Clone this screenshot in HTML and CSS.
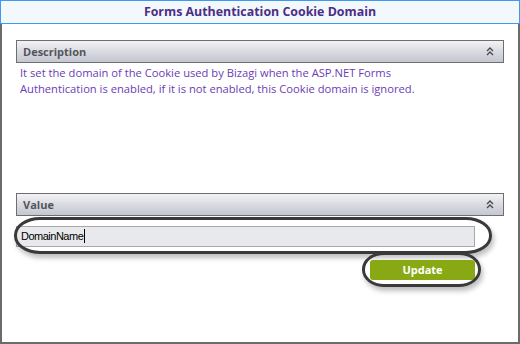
FILE: index.html
```html
<!DOCTYPE html>
<html>
<head>
<meta charset="utf-8">
<link rel="stylesheet" href="styles.css">
</head>
<body>
<div class="window">
  <div class="titlebar">Forms Authentication Cookie Domain</div>
  <div class="content">
    <div class="panel-header">
      <span class="panel-title">Description</span>
      <svg class="chev" width="8" height="9" viewBox="0 0 8 9"><polyline points="1,4 4,1 7,4" fill="none" stroke="#4a4a4a" stroke-width="1.4"/><polyline points="1,8 4,5 7,8" fill="none" stroke="#4a4a4a" stroke-width="1.4"/></svg>
    </div>
    <p class="desc">It set the domain of the Cookie used by Bizagi when the ASP.NET Forms Authentication is enabled, if it is not enabled, this Cookie domain is ignored.</p>
    <div class="panel-header value-header">
      <span class="panel-title">Value</span>
      <svg class="chev" width="8" height="9" viewBox="0 0 8 9"><polyline points="1,4 4,1 7,4" fill="none" stroke="#4a4a4a" stroke-width="1.4"/><polyline points="1,8 4,5 7,8" fill="none" stroke="#4a4a4a" stroke-width="1.4"/></svg>
    </div>
    <div class="value-body">
      <div class="field">
        <div class="input">DomainName<span class="caret"></span></div>
        <div class="ring ring-input"></div>
      </div>
      <div class="actions">
        <div class="btn-wrap">
          <div class="btn">Update</div>
          <div class="ring ring-btn"></div>
        </div>
      </div>
    </div>
  </div>
</div>
</body>
</html>
```

FILE: styles.css
```css
html, body {
  margin: 0;
  padding: 0;
  background: #ffffff;
}
.window {
  width: 520px;
  height: 344px;
  display: flex;
  flex-direction: column;
  box-sizing: border-box;
  font-family: "Open Sans", "Noto Sans", sans-serif;
}
.titlebar {
  height: 24px;
  box-sizing: border-box;
  border: 1px solid #3c98f2;
  background: #f3f8fd;
  color: #4a2f86;
  font-weight: bold;
  font-size: 12.4px;
  line-height: 22px;
  text-align: center;
}
.content {
  flex: 1;
  border: 2px solid #6b6b6b;
  border-top: none;
  padding: 16px 14px 0 14px;
}
.panel-header {
  height: 23px;
  box-sizing: border-box;
  border: 1px solid #6e6e70;
  background: linear-gradient(#f3f3f5, #dcdde3 45%, #c4c6d2);
  display: flex;
  align-items: center;
  justify-content: space-between;
  padding: 0 9px 0 6px;
}
.panel-title {
  color: #555559;
  font-weight: bold;
  font-size: 11px;
}
.chev {
  display: block;
}
.desc {
  margin: 2px 0 0 4px;
  max-width: 410px;
  color: #6a3db5;
  font-size: 11.2px;
  line-height: 16px;
}
.value-header {
  margin-top: 96px;
}
.value-body {
  width: 459px;
}
.field {
  position: relative;
  margin-top: 10px;
}
.input {
  height: 21px;
  box-sizing: border-box;
  border: 1px solid #a8a8ac;
  background: #e8e9ec;
  font-family: "Liberation Sans", Arial, sans-serif;
  font-size: 11px;
  letter-spacing: -0.5px;
  line-height: 19px;
  padding-left: 4px;
  color: #000;
}
.caret {
  display: inline-block;
  width: 1px;
  height: 14px;
  background: #000;
  vertical-align: -3px;
  margin-left: 1px;
}
.actions {
  display: flex;
  justify-content: flex-end;
  margin-top: 13px;
}
.btn-wrap {
  position: relative;
}
.btn {
  width: 105px;
  height: 20px;
  background: #88a914;
  border-radius: 3px;
  color: #ffffff;
  font-weight: bold;
  font-size: 11px;
  line-height: 20px;
  text-align: center;
}
.ring {
  position: absolute;
  border: 3px solid #3a3a3a;
  box-shadow: 2px 4px 5px rgba(0, 0, 0, 0.25);
  pointer-events: none;
}
.ring-input {
  left: -2px;
  top: -9px;
  right: -17px;
  bottom: -7px;
  border-radius: 26px / 18px;
}
.ring-btn {
  left: -8px;
  top: -8px;
  right: -6px;
  bottom: -7px;
  border-radius: 22px / 17px;
}
```
